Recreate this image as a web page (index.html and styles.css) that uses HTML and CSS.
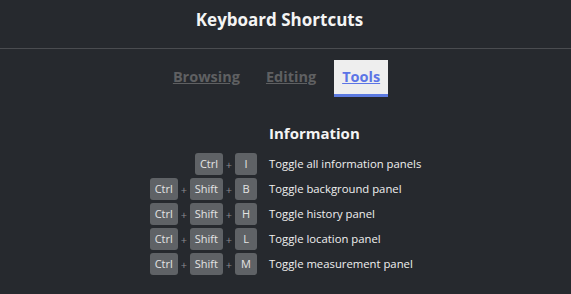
FILE: index.html
```html
<!DOCTYPE html>
<html lang="en">

<head>
    <meta charset="UTF-8">
    <meta name="viewport" content="width=device-width, initial-scale=1.0">
    <title>Keyboard Shortcuts</title>
    <link rel="stylesheet" href="styles.css">
</head>

<body>
    <div class="modal">
        <div class="header">
            <h2>Keyboard Shortcuts</h2>
        </div>
        <div class="tabs">
            <a class="tab">Browsing</a>
            <a class="tab">Editing</a>
            <a class="tab active">Tools</a>
        </div>
        <div class="shortcuts">
            <div></div>
            <h3>Information</h3>

            <div class="keys"><kbd>Ctrl</kbd><span>+</span><kbd>I</kbd></div>
            <div class="desc">Toggle all information panels</div>

            <div class="keys"><kbd>Ctrl</kbd><span>+</span><kbd>Shift</kbd><span>+</span><kbd>B</kbd></div>
            <div class="desc">Toggle background panel</div>

            <div class="keys"><kbd>Ctrl</kbd><span>+</span><kbd>Shift</kbd><span>+</span><kbd>H</kbd></div>
            <div class="desc">Toggle history panel</div>

            <div class="keys"><kbd>Ctrl</kbd><span>+</span><kbd>Shift</kbd><span>+</span><kbd>L</kbd></div>
            <div class="desc">Toggle location panel</div>

            <div class="keys"><kbd>Ctrl</kbd><span>+</span><kbd>Shift</kbd><span>+</span><kbd>M</kbd></div>
            <div class="desc">Toggle measurement panel</div>
        </div>
    </div>
</body>

</html>
```

FILE: styles.css
```css
body {
    margin: 0;
    background-color: #26292e;
    font-family: "Open Sans", "Noto Sans", sans-serif;
    color: #f0f0f0;
}

.header {
    height: 48px;
    padding-right: 12px;
    border-bottom: 1px solid #4a4c50;
    display: flex;
    justify-content: center;
    align-items: center;
}

.header h2 {
    margin: 0;
    padding-bottom: 10px;
    font-size: 17px;
    font-weight: bold;
    color: #f4f4f4;
}

.tabs {
    display: flex;
    justify-content: center;
    gap: 10px;
    margin-top: 11px;
    padding-right: 18px;
}

.tab {
    display: block;
    padding: 7px 8px 8px;
    font-size: 14.5px;
    font-weight: bold;
    color: #5f6062;
    text-decoration: underline;
    border-bottom: 3px solid transparent;
}

.tab.active {
    background-color: #eeeeee;
    color: #5c75e6;
    border-bottom-color: #5c7ae0;
}

.shortcuts {
    display: grid;
    grid-template-columns: 257px auto;
    column-gap: 12px;
    row-gap: 3px;
    margin-top: 26px;
}

.shortcuts h3 {
    margin: 0 0 7px;
    font-size: 15px;
    font-weight: bold;
    color: #f4f4f4;
}

.keys {
    display: flex;
    justify-content: flex-end;
    align-items: center;
    height: 22px;
}

.keys span {
    width: 12px;
    text-align: center;
    font-size: 11px;
    color: #8a8c90;
}

kbd {
    display: inline-block;
    min-width: 22px;
    height: 22px;
    line-height: 22px;
    padding: 0 5px;
    box-sizing: border-box;
    border-radius: 3px;
    background-color: #5f6266;
    color: #e4e4e4;
    font-family: "Open Sans", "Noto Sans", sans-serif;
    font-size: 11px;
    text-align: center;
}

.desc {
    height: 22px;
    line-height: 22px;
    font-size: 11.3px;
    color: #f0f0f0;
    white-space: nowrap;
}
```
